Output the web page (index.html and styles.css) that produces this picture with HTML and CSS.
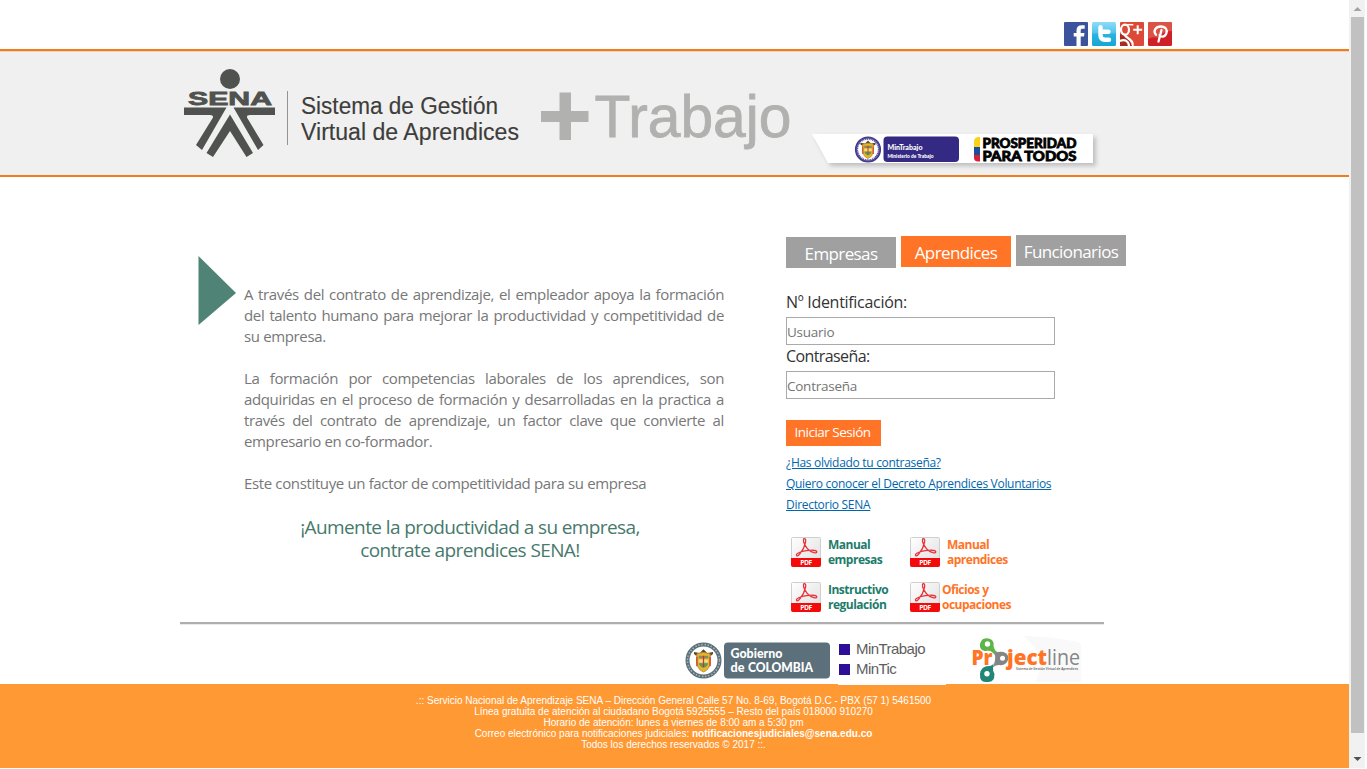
FILE: index.html
```html
<!DOCTYPE html>
<html lang="es">
<head>
<meta charset="utf-8">
<title>Sistema de Gestión Virtual de Aprendices</title>
<link rel="stylesheet" href="styles.css">
</head>
<body>
<svg class="defs" width="0" height="0" aria-hidden="true">
  <defs>
    <linearGradient id="paper" x1="0" y1="0" x2="1" y2="1"><stop offset="0" stop-color="#fff"/><stop offset="1" stop-color="#dedede"/></linearGradient>
    <linearGradient id="sky" x1="0" y1="0" x2="0" y2="1"><stop offset="0" stop-color="#8ddcf8"/><stop offset=".45" stop-color="#52c4ec"/><stop offset=".5" stop-color="#2bb4e0"/><stop offset="1" stop-color="#16a5d3"/></linearGradient>
    <symbol id="pdf" viewBox="0 0 30 30">
      <rect x=".5" y=".5" width="29" height="29" rx="1" fill="url(#paper)" stroke="#cfcfcf"/>
      <path d="M0 21h30v7q0 2-2 2H2q-2 0-2-2z" fill="#f40a0a"/>
      <path d="M5.700 18.600c-1.600-1.700 4-4.200 9.800-5 4.500-.7 10-.6 10.300 1.200.2 2.100-5 .9-8.300-2.100-3.200-3-5.500-8-5-10.100.5-2 2.900-.9 2.100 2.500-.9 4.600-3.900 9.600-5.900 12.100-1.100 1.400-2.100 2-3 1.400z" fill="none" stroke="#e8323a" stroke-width="1.300"/>
      <text x="9.300" y="28" textLength="11.500" lengthAdjust="spacingAndGlyphs" font-size="7" class="pdf-tag">PDF</text>
    </symbol>
    <symbol id="shield" viewBox="0 0 36 36">
      <circle cx="18" cy="18" r="13" fill="#fff"/>
      <path d="M11 13q-4-1-3-4l6 1 4-4 4 4 6-1q1 3-3 4z" fill="#5a4a2a"/>
      <path d="M11 11q7-3 14 0v10q-1 7-7 9-6-2-7-9z" fill="#e8b52c" stroke="#bf872b"/>
      <path d="M13 13h10v3H13z" fill="#8e8a53"/><path d="M13 17h10v3H13z" fill="#f1d98b"/><path d="M13 21h10q-1 4-5 5-4-1-5-5z" fill="#5d9a59"/>
      <path d="M11 14v10M25 14v10M18 13v12" stroke="#c33931" stroke-width="1.300"/>
    </symbol>
  </defs>
</svg>
<div class="window">
  <div class="page">
    <div class="social">
      <svg width="24" height="24" viewBox="0 0 24 24"><rect width="24" height="24" rx="1" fill="#3b539c"/><path d="M12.500 24v-9.500H9.700V11h2.800V8.500C12.500 5 14.500 3.300 17.700 3.300h3v3.500H18.500c-1.200 0-1.800.6-1.800 1.700V11h3.800l-.5 3.500h-3.300V24z" fill="#fff"/></svg>
      <svg width="24" height="24" viewBox="0 0 24 24"><rect width="24" height="24" rx="1.500" fill="url(#sky)"/><path d="M8.500 5.300V13q0 4.700 4.500 4.700h4M8.500 9.700h8" fill="none" stroke="#fff" stroke-width="4.400" stroke-linecap="round"/></svg>
      <svg width="24" height="24" viewBox="0 0 24 24"><rect width="24" height="24" rx="1" fill="#dc4937"/><path d="M0 12l6 1 6 11H0z" fill="#a62d24"/><path d="M5 2.700h8.300" stroke="#fff" stroke-width="1.500"/><ellipse cx="5" cy="7.700" rx="4" ry="5" fill="none" stroke="#fff" stroke-width="2.200"/><path d="M5.500 12.500c-2 2.500 6 4 7 8.500.3 1.500 0 3-.5 3M0 19c5-2 8.500 0 9 5" fill="none" stroke="#fff" stroke-width="2.200"/><path d="M17.700 3.300v9M13.200 7.800h9" stroke="#fff" stroke-width="2"/></svg>
      <svg width="24" height="24" viewBox="0 0 24 24"><rect width="24" height="24" rx="1.500" fill="#cf2027"/><path d="M0 1.500Q0 0 1.500 0h21Q24 0 24 1.500V9q-10 0-13 7-6-2-11 1z" fill="#db5346"/><path d="M8 12.800C4.500 9 8 4.500 12.800 4.500c4.900 0 7 3.500 5.500 7-1.700 4-6 3.800-6.700 1.500M13.500 8L10.500 19.500" fill="none" stroke="#fff" stroke-width="2.300" stroke-linecap="round"/></svg>
    </div>
    <header class="masthead">
      <svg class="sena" width="92" height="90" viewBox="0 0 92 90" fill="#50524f">
        <circle cx="46" cy="11" r="10"/>
        <text x="4" y="37" textLength="84" lengthAdjust="spacingAndGlyphs" font-size="18.500" class="sena-word">SENA</text>
        <path d="M0 39.500h42.500l-24.500 42.500-6-5L29 49.500q.5-2.500-3-2.500H0z"/>
        <path d="M49.500 39.500H91V47H66q-3.500 0-3 2.500L79.500 77 74 82z"/>
        <path d="M46 46.500l23 38.500-6.500 4L46 63 29 89l-6.500-4z"/>
      </svg>
      <div class="divider"></div>
      <svg class="system" width="224" height="56" viewBox="0 0 224 56">
        <text x="0" y="22.500" textLength="197" lengthAdjust="spacingAndGlyphs">Sistema de Gestión</text>
        <text x="0" y="48.500" textLength="218" lengthAdjust="spacingAndGlyphs">Virtual de Aprendices</text>
      </svg>
      <svg class="trabajo" width="256" height="76" viewBox="0 0 256 76">
        <path d="M18.500 4.500H30V23H47.500V34H30V52H18.500V34H0V23H18.500z"/>
        <text x="53.500" y="49" textLength="197" lengthAdjust="spacingAndGlyphs">Trabajo</text>
      </svg>
      <svg class="ribbon" width="300" height="42" viewBox="0 0 300 42">
        <path class="ribbon-shape" d="M1 4H282V33H17z"/>
        <circle cx="57" cy="19.500" r="12" fill="#fff" stroke="#403b8d" stroke-width="2.200"/>
        <circle cx="57" cy="19.500" r="10.800" fill="none" stroke="#57539b" stroke-width="2.400" stroke-dasharray="1.200 .7"/>
        <use href="#shield" x="43.500" y="6" width="27" height="27"/>
        <rect x="72.500" y="6.500" width="75.500" height="25.500" rx="4" fill="#342983"/>
        <text x="76.500" y="20" textLength="35" lengthAdjust="spacingAndGlyphs" font-size="7.500" fill="#fff">MinTrabajo</text>
        <text x="76.500" y="27.500" textLength="46" lengthAdjust="spacingAndGlyphs" font-size="5.200" fill="#fff">Ministerio de Trabajo</text>
        <path d="M163 17v-5q0-5 5-5h1v10z" fill="#fcd116"/><path d="M163 17h6v8h-6z" fill="#1b4f9c"/><path d="M163 25h6v6.500h-2q-4 0-4-4z" fill="#d8203a"/>
        <g class="slogan-mark"><text x="171.500" y="17.800" textLength="94" lengthAdjust="spacingAndGlyphs">PROSPERIDAD</text><text x="171.500" y="31" textLength="94" lengthAdjust="spacingAndGlyphs">PARA TODOS</text></g>
      </svg>
    </header>
    <main class="content">
      <section class="intro">
        <svg width="40" height="70" viewBox="0 0 40 70"><path d="M.5 0L38 37 .5 69z" fill="#4f8376"/></svg>
        <div class="copy">
          <p><span class="full">A través del contrato de aprendizaje, el empleador apoya la formación</span><span class="full">del talento humano para mejorar la productividad y competitividad de</span><span>su empresa.</span></p>
          <p><span class="full">La formación por competencias laborales de los aprendices, son</span><span class="full">adquiridas en el proceso de formación y desarrolladas en la practica a</span><span class="full">través del contrato de aprendizaje, un factor clave que convierte al</span><span>empresario en co-formador.</span></p>
          <p><span>Este constituye un factor de competitividad para su empresa</span></p>
          <h2>¡Aumente la productividad a su empresa,<br>contrate aprendices SENA!</h2>
        </div>
      </section>
      <section class="access">
        <nav class="tabs"><a class="tab low">Empresas</a><a class="tab active">Aprendices</a><a class="tab high">Funcionarios</a></nav>
        <form>
          <label for="user">Nº Identificación:</label>
          <input id="user" type="text" placeholder="Usuario">
          <label for="pass">Contraseña:</label>
          <input id="pass" type="password" placeholder="Contraseña">
          <button type="button">Iniciar Sesión</button>
        </form>
        <div class="links"><a href="#">¿Has olvidado tu contraseña?</a><a href="#">Quiero conocer el Decreto Aprendices Voluntarios</a><a href="#">Directorio SENA</a></div>
        <div class="manuals">
          <a class="manual green"><svg width="30" height="30"><use href="#pdf"/></svg><span>Manual<br>empresas</span></a>
          <a class="manual orange"><svg width="30" height="30"><use href="#pdf"/></svg><span>Manual<br>aprendices</span></a>
          <a class="manual green"><svg width="30" height="30"><use href="#pdf"/></svg><span>Instructivo<br>regulación</span></a>
          <a class="manual orange tight"><svg width="30" height="30"><use href="#pdf"/></svg><span>Oficios y<br>ocupaciones</span></a>
        </div>
      </section>
    </main>
    <div class="partners">
      <svg class="gobierno" width="148" height="40" viewBox="0 0 148 40">
        <circle cx="18.500" cy="20.500" r="16" fill="#fff" stroke="#5b707b" stroke-width="4"/>
        <circle cx="18.500" cy="20.500" r="16" fill="none" stroke="#a9b5ba" stroke-width="1.500" stroke-dasharray="1.500 1.500 1.500 1.500 1.500 2"/>
        <use href="#shield" x="1.500" y="3.500" width="34" height="34"/>
        <rect x="39" y="2.500" width="106" height="36" rx="4" fill="#5b707b"/>
        <text x="45.500" y="18" textLength="52" lengthAdjust="spacingAndGlyphs">Gobierno</text>
        <text x="45.500" y="31.500" textLength="14" lengthAdjust="spacingAndGlyphs">de</text>
        <text x="63" y="31.500" textLength="65" lengthAdjust="spacingAndGlyphs">COLOMBIA</text>
      </svg>
      <ul class="ministries"><li>MinTrabajo</li><li>MinTic</li></ul>
      <svg class="projectline" width="116" height="48" viewBox="0 0 116 48">
        <path d="M55 0q29 0 55 6 3 1 3 5v35H67q16-25-12-46z" fill="#f9f9f9"/>
        <text x="3.500" y="28.500" textLength="21" lengthAdjust="spacingAndGlyphs" class="brand bold">Pr</text>
        <text x="39" y="28.500" textLength="40" lengthAdjust="spacingAndGlyphs" class="brand bold">ject</text>
        <text x="79" y="28.500" textLength="33" lengthAdjust="spacingAndGlyphs" class="brand light">line</text>
        <path d="M15 3q5-2 9 1 2 2 1.500 6 1 5 4 6l-2.500 3c-3-3-4-5-9-4-8 0-7-9-3-12z" fill="#5db547"/>
        <path d="M26.500 17q5-2 9-1 6 2 4.500 8-2 6-9 5-4 0-6.500 3 4-8 2-15z" fill="#858585"/>
        <path d="M27 25q-4 6-.5 13 0 8-6 8h-3q-6 0-5.500-8 1-8 9-8 4 0 6-5z" fill="#218677"/>
        <circle cx="19.500" cy="8" r="2.700" fill="#fff"/><circle cx="34.500" cy="22.300" r="2.500" fill="#fff"/><circle cx="19" cy="37.700" r="2.700" fill="#fff"/>
        <text x="48" y="34" textLength="62" lengthAdjust="spacingAndGlyphs" font-size="3.600" class="tagline">Sistema de Gestión Virtual de Aprendices</text>
      </svg>
    </div>
    <footer>
      <p>.:: Servicio Nacional de Aprendizaje SENA – Dirección General Calle 57 No. 8-69, Bogotá D.C - PBX (57 1) 5461500</p>
      <p>Línea gratuita de atención al ciudadano Bogotá 5925555 – Resto del país 018000 910270</p>
      <p>Horario de atención: lunes a viernes de 8:00 am a 5:30 pm</p>
      <p>Correo electrónico para notificaciones judiciales: <b>notificacionesjudiciales@sena.edu.co</b></p>
      <p>Todos los derechos reservados © 2017 ::.</p>
    </footer>
  </div>
  <div class="scrollbar">
    <svg width="16" height="17" viewBox="0 0 16 17"><path d="M4.500 11L8.500 7l4 4z" fill="#a3a3a3"/></svg>
    <div class="thumb"></div>
    <svg width="16" height="17" viewBox="0 0 16 17"><path d="M4.500 6h8l-4 4z" fill="#505050"/></svg>
  </div>
</div>
</body>
</html>
```
FILE: styles.css
```css
* { box-sizing: border-box; }
body { margin: 0; background: #fff; font-family: "Open Sans", "Noto Sans", sans-serif; overflow: hidden; }
.defs { display: block; height: 0; }
svg { display: block; flex: none; }
p, h2, ul { margin: 0; padding: 0; }
.window { display: flex; width: 1367px; height: 768px; }
.page { width: 1349px; display: flex; flex-direction: column; }

.social { height: 49px; display: flex; gap: 4px; padding: 22px 0 0 1064px; }

.masthead { height: 128px; display: flex; align-items: flex-start; padding-left: 184px; background: #f0f0f0; border-top: 2px solid #ee7d1e; border-bottom: 2px solid #ee7d1e; box-shadow: inset 0 1px #f3d3b8; }
.sena { margin-top: 17px; }
.sena-word { font-family: "Liberation Sans", sans-serif; font-weight: bold; stroke: #50524f; stroke-width: .8; }
.divider { width: 1px; height: 54px; margin: 40px 13px 0 11px; background: #949494; }
.system { margin-top: 40px; font: 23px "Liberation Sans", sans-serif; fill: #3d3d3b; stroke: #3d3d3b; stroke-width: .15; }
.trabajo { margin: 37px 0 0 16px; font: 60px "Liberation Sans", sans-serif; fill: #b1b1af; stroke: #b1b1af; }
.trabajo text { stroke-width: .8; }
.trabajo path { stroke: none; }
.ribbon { margin: 79px 0 0 14px; font-family: Lato, "Open Sans", sans-serif; font-weight: 900; }
.ribbon-shape { fill: #fff; filter: drop-shadow(3px 3px 2px rgba(0, 0, 0, .2)); }
.slogan-mark { font-size: 14px; stroke: #000; stroke-width: .8; }

.content { height: 445px; display: flex; padding-left: 198px; }
.intro { width: 588px; display: flex; padding-top: 79px; }
.copy { width: 480px; margin: 28px 0 0 6px; color: #777; font-size: 15px; line-height: 21px; letter-spacing: -.36px; }
.copy p { margin-bottom: 21px; }
.copy span { display: block; white-space: nowrap; }
.copy .full { text-align-last: justify; }
.copy h2 { width: 452px; padding-top: 1px; font-size: 19px; font-weight: 400; line-height: 23px; letter-spacing: -.6px; text-align: center; white-space: nowrap; color: #47796d; }

.access { padding-top: 58px; }
.tabs { display: flex; gap: 5px; margin-bottom: 24px; }
.tab { width: 110px; height: 31px; padding-top: 5px; margin: 1px 0 -1px; background: #a0a0a0; color: #fff; font-size: 17px; line-height: 24px; letter-spacing: -.6px; text-align: center; }
.tab.active { background: #ff7426; }
.tab.low { margin: 2px 0 -2px; }
.tab.high { margin: 0; }
form { width: 269px; }
label { display: block; height: 27px; line-height: 24px; font-size: 16px; letter-spacing: -.3px; color: #333; }
label[for="pass"] { letter-spacing: -.6px; }
input { display: block; width: 269px; height: 28px; margin: 0 0 -1px; padding: 2px 0 0; border: 1px solid #aaa; background: #fff; font: 13.500px "Open Sans", sans-serif; letter-spacing: -.25px; }
input::placeholder { color: #757575; opacity: 1; }
button { display: block; width: 95px; height: 26px; margin-top: 22px; padding: 0 2px 1px 0; border: 0; background: #ff7426; color: #fff; font: 500 13.500px/25px "Open Sans", sans-serif; letter-spacing: -.5px; }
.links { display: flex; flex-direction: column; align-items: flex-start; margin-top: 6px; }
.links a { font-size: 12px; line-height: 21px; letter-spacing: -.3px; color: #0067ae; }
.manuals { display: grid; grid-template-columns: 119px 130px; row-gap: 15px; margin: 22px 0 0 5px; }
.manual { display: flex; gap: 7px; height: 30px; font-size: 12px; font-weight: 700; line-height: 15px; letter-spacing: -.5px; }
.green { color: #1d7c6b; }
.orange { color: #ff7426; }
.tight { gap: 2px; }
.pdf-tag { font-family: "Open Sans", sans-serif; font-weight: 700; fill: #fff; }

.partners { height: 62px; width: 924px; margin-left: 180px; display: flex; align-items: flex-start; border-top: 2px solid #aeaeae; box-shadow: inset 0 1px #e9e9e9; }
.gobierno { margin: 16px 0 0 505px; font: 900 13px Lato, sans-serif; fill: #fff; }
.ministries { position: relative; width: 108px; height: 61px; margin-left: 5px; padding: 15px 0 0 1px; list-style: none; font: 15px/20px "Liberation Sans", sans-serif; letter-spacing: -.55px; color: #5e5e5e; border-bottom: 1px solid #fff; }
.ministries li { display: flex; align-items: center; gap: 6px; }
.ministries li::before { content: ""; width: 11px; height: 11px; background: #2e1098; }
.projectline { margin: 12px 0 0 22px; }
.brand { font-family: "Open Sans", sans-serif; font-size: 21px; }
.bold { font-weight: 800; fill: #ff7426; }
.light { fill: #858585; }
.tagline { font-family: "Open Sans", sans-serif; font-weight: 600; fill: #555; }

footer { height: 84px; padding-top: 11px; padding-right: 2px; background: #ff9933; color: #fff; text-align: center; font: 10px/11px "Liberation Sans", sans-serif; }
footer p { white-space: nowrap; }

.scrollbar { width: 16px; height: 768px; display: flex; flex-direction: column; background: #f1f1f1; }
.thumb { width: 13px; height: 716px; margin-left: 2px; margin-bottom: 18px; background: #c1c1c1; }
```
